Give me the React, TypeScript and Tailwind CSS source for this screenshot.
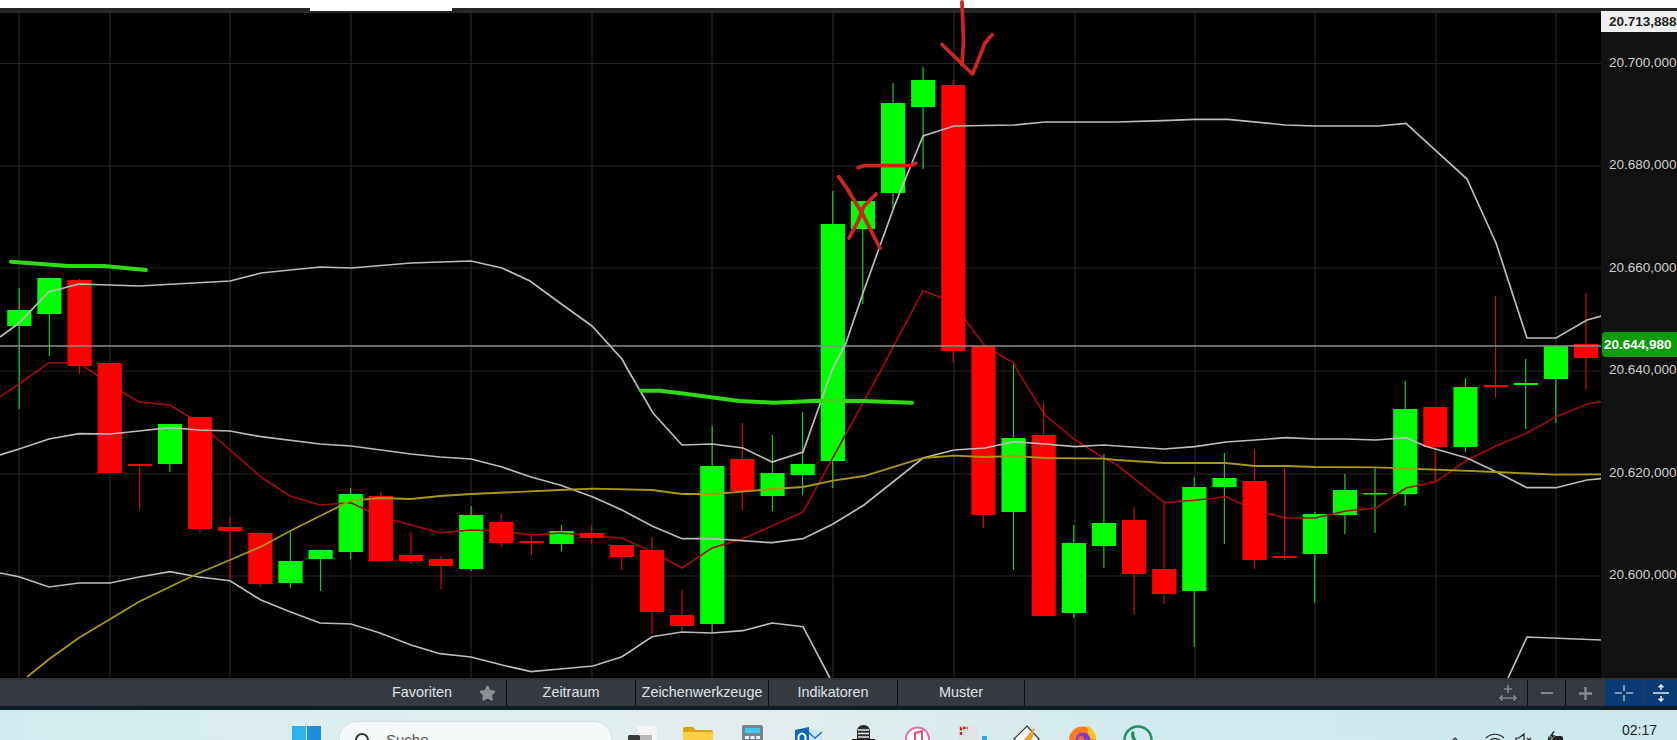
import { Star } from "lucide-react";

type Candle = [up: 0 | 1, wickTop: number, top: number, bottom: number, wickBottom: number];

const candles: Candle[] = [
  [1, 288, 310, 326, 409],
  [1, 278, 278, 314, 356],
  [0, 279, 280, 366, 374],
  [0, 363, 363, 473, 473],
  [0, 464, 464, 466, 510],
  [1, 424, 424, 464, 472],
  [0, 417, 417, 529, 533],
  [0, 517, 527, 531, 578],
  [0, 532, 533, 584, 587],
  [1, 532, 561, 583, 588],
  [1, 550, 550, 559, 591],
  [1, 488, 494, 552, 559],
  [0, 492, 496, 561, 561],
  [0, 532, 555, 561, 564],
  [0, 556, 559, 566, 589],
  [1, 506, 515, 569, 571],
  [0, 514, 522, 543, 547],
  [0, 536, 541, 543, 555],
  [1, 525, 531, 544, 551],
  [0, 525, 533, 538, 544],
  [0, 545, 545, 557, 570],
  [0, 537, 550, 612, 634],
  [0, 590, 615, 626, 632],
  [1, 426, 466, 624, 633],
  [0, 423, 459, 491, 510],
  [1, 435, 473, 496, 511],
  [1, 412, 464, 475, 495],
  [1, 191, 224, 461, 488],
  [1, 201, 201, 229, 304],
  [1, 83, 103, 193, 208],
  [1, 67, 80, 107, 169],
  [0, 80, 85, 351, 363],
  [0, 346, 346, 515, 528],
  [1, 363, 438, 512, 570],
  [0, 402, 435, 616, 616],
  [1, 525, 543, 613, 618],
  [1, 454, 523, 546, 568],
  [0, 507, 520, 574, 615],
  [0, 503, 569, 594, 604],
  [1, 477, 487, 591, 647],
  [1, 453, 478, 487, 544],
  [0, 450, 481, 560, 569],
  [0, 468, 556, 558, 560],
  [1, 512, 514, 554, 603],
  [1, 474, 490, 515, 534],
  [1, 468, 493, 494.5, 533],
  [1, 381, 409, 494, 506],
  [0, 407, 407, 447, 482],
  [1, 378, 387, 447, 452],
  [0, 296, 385, 387, 398],
  [1, 359, 383, 385, 429],
  [1, 346, 346, 379, 423],
  [0, 293, 344, 358, 390],
];

const upperBand =
  "0,337 19,323 48.6,292 79,284 139,286 230,281 261,273 320,267 351,268 411,263 471,261 502,268 530,281 560,303 592,326 622,359 628,370 653,413 682,445 712,444 743,448 772,462 803,452 832,370 846,343 863,293 894,207 923,136 954,126 1014,125 1045,122 1117,122 1163,120.7 1195,119.3 1228,119.3 1285,125 1315,126 1378,126 1406,123.3 1467,179 1496,243 1527,338 1556,338 1587,320 1601,316";
const middleBand =
  "0,455 19,449 49,439 79,433.7 110,434 139,431 170,427.7 199,430 230,431 261,436.7 320,444 351,446 411,454 440,457 471,459 502,467 531,477 560,485 593,497 622,510 652,526 682,538.7 712,538.7 772,542.7 803,538.7 833,524 864,505 923,458 954,450 985,448 1014,441.7 1045,444 1075,446.7 1104,445 1117,446 1164,449 1195,446.7 1226,442 1255,440 1286,437.7 1315,439 1346,439 1376,440 1406,437.7 1425,446 1467,458 1496,471.7 1527,487.7 1556,487.7 1587,480 1601,478.7";
const lowerBand =
  "0,573 19,576.7 49,587 79,583 110,583 139,577 170,571.7 199,577 230,580.7 261,600 290,611.7 320,623 351,624 380,633 411,645 440,653.7 471,657 502,665 531,671.7 560,669 593,666 622,656.7 652,636.7 682,632 712,633 743,630.7 772,623 803,626.7 830,678";
const lowerBandEnd = "1508,678 1527,637 1601,640";
const redLine =
  "0,396.7 19,384 48.6,363 79,363 122,392 139,402 170,405 199,423 230,450 261,477 290,496 320,505 351,502.7 380,516.7 411,525 440,532.7 471,530 502,531 531,535 560,533 593,535.7 622,538 652,551.7 682,568 712,548 743,538.7 772,526 803,512 881,370 923,290.7 942,298 954,302 966,320.7 984,345 996,353 1014,363 1017,370 1045,415 1075,440 1104,458 1117,465 1164.5,502.7 1195,500.3 1226,496.7 1255,510 1286,518 1315,518 1346,511 1376,508 1406,488 1436,481.7 1467,460 1496,446 1527,433 1556,416.7 1587,404 1601,402";
const yellowLine =
  "27,677 48,660 79,637.7 139,601.7 170,586.7 199,573 230,560 261,546.7 290,531 320,516 351,500.7 380,498 411,499 440,496 471,494 560,490 593,488.7 652,490 682,494 712,494 743,491.7 772,489 803,487 833,480.7 864,476 923,458 954,455.7 985,457 1014,456 1045,458 1104,458.7 1117,460 1164,463 1226,463 1255,466 1286,466 1315,467 1376,467.3 1436,469.7 1496,472 1556,474.7 1601,474.3";

const gridX = [19, 110, 230, 351, 471, 592, 712, 833, 954, 1075, 1195, 1315, 1436, 1556];
const gridY = [63.5, 166, 268, 371, 474, 576];
const axisLabels = ["20.700,000", "20.680,000", "20.660,000", "20.640,000", "20.620,000", "20.600,000"];

const candleX = (i: number) => 19.2 + 30.13 * i;

function Candles({ up }: { up: 0 | 1 }) {
  return (
    <g>
      {candles.map((c, i) => {
        if (c[0] !== up) return null;
        const x = candleX(i);
        return (
          <g key={i}>
            <line x1={x} x2={x} y1={c[1]} y2={c[4]} stroke={up ? "#16d016" : "#d00c0c"} strokeWidth="1.2" />
            <rect x={x - 12} y={c[2]} width="24.2" height={c[3] - c[2]} fill={up ? "#00ff00" : "#ff0000"} />
          </g>
        );
      })}
    </g>
  );
}

function Chart() {
  return (
    <svg viewBox="0 13 1601 665" className="block h-[665px] w-[1601px]">
      {gridX.map((x) => (
        <line key={x} x1={x} x2={x} y1="13" y2="678" stroke="#272727" strokeWidth="1.2" />
      ))}
      {gridY.map((y) => (
        <line key={y} x1="0" x2="1601" y1={y} y2={y} stroke="#272727" strokeWidth="1.2" />
      ))}
      <Candles up={1} />
      <polyline points={redLine} fill="none" stroke="#a80a0a" strokeWidth="1.6" />
      <Candles up={0} />
      <line x1="0" x2="1601" y1="346" y2="346" stroke="#8c8c8c" strokeWidth="1.4" />
      <g fill="none" stroke="#bcbcbc" strokeWidth="1.7">
        <polyline points={upperBand} />
        <polyline points={middleBand} />
        <polyline points={lowerBand} />
        <polyline points={lowerBandEnd} />
      </g>
      <polyline points={yellowLine} fill="none" stroke="#a8980e" strokeWidth="1.8" />
      <g fill="none" stroke="#2fdc12" strokeWidth="4" strokeLinecap="round" strokeLinejoin="round">
        <polyline points="11,261.7 68,266 104,266 146,270" />
        <polyline points="641,390.7 660,390.7 685,393.7 739,401 774,402.7 817,400.7 864,401 912,402.7" />
      </g>
    </svg>
  );
}

// hand drawn marks, these run over the white top bar
function Annotations() {
  return (
    <svg viewBox="0 0 1677 300" className="pointer-events-none absolute top-0 left-0 h-[300px] w-[1677px]">
      <g fill="none" stroke="#c9261c" strokeWidth="3.8" strokeLinecap="round" strokeLinejoin="round">
        <polyline points="962,2 963.5,40 962,65" />
        <polyline points="942,44.5 960,62 972.5,74 979.5,57 985,43 992,34.7" />
        <polyline points="858,167.7 864,165.7 910,165.7 916,163.3" />
        <polyline points="838.6,176.7 846,187 862,213 874,236.7 880,248" />
        <polyline points="876,194 863.6,206.7 858,221.7 849,238" />
      </g>
    </svg>
  );
}

function PriceAxis() {
  return (
    <div className="relative w-[76px] shrink-0 bg-[#111111] text-[13.5px] leading-none text-[#cfcfcf]">
      <div className="-mt-[2px] flex flex-col">
        {axisLabels.map((label) => (
          <div key={label} className="flex h-[102.5px] items-center whitespace-nowrap pl-[8px]">
            {label}
          </div>
        ))}
      </div>
      <div className="absolute -top-[2px] left-0 flex h-[21px] w-full items-center whitespace-nowrap bg-[#efefef] pl-[8px] font-bold text-[#222222]">
        20.713,888
      </div>
      <div className="absolute top-[319px] left-[1px] flex h-[25px] w-[75px] items-center whitespace-nowrap rounded-l-[4px] bg-[#0a9c0a] pl-[2px] font-bold text-white">
        20.644,980
      </div>
    </div>
  );
}

function ToolCell({ label, className }: { label: string; className: string }) {
  return (
    <div className={`flex h-full items-center justify-center border-r border-[#0c0c0c] text-[14.4px] text-[#dfe2e5] ${className}`}>
      {label}
    </div>
  );
}

function Toolbar() {
  return (
    <div className="flex h-[28px] shrink-0 border-t-2 border-[#2f3237] bg-[#363a40]">
      <div className="flex h-full w-[507px] items-center justify-end border-r border-[#0c0c0c] pr-[10px]">
        <span className="mr-[27px] text-[14.4px] text-[#dfe2e5]">Favoriten</span>
        <Star size={17} className="fill-[#8d9095] text-[#8d9095]" />
      </div>
      <ToolCell label="Zeitraum" className="w-[129px]" />
      <ToolCell label="Zeichenwerkzeuge" className="w-[133px]" />
      <ToolCell label="Indikatoren" className="w-[129px]" />
      <ToolCell label="Muster" className="w-[127px]" />
      <div className="flex h-full flex-1 items-center justify-end border-r border-[#0c0c0c] pr-[10px]">
        <svg width="18" height="18" viewBox="0 0 18 18" fill="none" stroke="#85898e" strokeWidth="1.6">
          <path d="M9 1v8M5 5h8M1 14h16M3.500 11.500 1 14l2.500 2.500M14.500 11.500 17 14l-2.500 2.500" />
        </svg>
      </div>
      <div className="flex h-full w-[38px] shrink-0 items-center justify-center border-r border-[#0c0c0c]">
        <span className="h-[2.5px] w-[12px] bg-[#85898e]" />
      </div>
      <div className="flex h-full w-[38px] shrink-0 items-center justify-center">
        <svg width="13" height="13" viewBox="0 0 13 13" stroke="#85898e" strokeWidth="2.4">
          <path d="M6.500 0v13M0 6.500h13" />
        </svg>
      </div>
      <div className="ml-px flex h-full w-[38px] shrink-0 items-center justify-center bg-[#0a3a73]">
        <svg width="18" height="18" viewBox="0 0 18 18" stroke="#dfe6ee" strokeWidth="1.1">
          <path d="M0 9h7M11 9h7M9 1v6M9 11v6" />
        </svg>
      </div>
      <div className="ml-px flex h-full w-[33px] shrink-0 items-center justify-center bg-[#0a3a73]">
        <svg width="18" height="18" viewBox="0 0 18 18" fill="none" stroke="#e6ebf1" strokeWidth="1.5">
          <path d="M1 9h16M9 1v5M6.500 3.500 9 1l2.500 2.500M9 17v-5M6.500 14.500 9 17l2.500-2.500" />
        </svg>
      </div>
    </div>
  );
}

function Taskbar() {
  return (
    <div className="flex h-[30px] shrink-0 items-start overflow-hidden bg-[linear-gradient(90deg,#d0ebee_0%,#dcedef_20%,#e4ecec_45%,#cfeaee_70%,#cbe9ed_100%)] pl-[292px]">
      <svg width="29" height="28" viewBox="0 0 29 28" className="mt-[16px] shrink-0">
        <rect width="14" height="14" fill="#2ab5f0" />
        <rect x="15" width="14" height="14" fill="#1a8fdc" />
      </svg>
      <div className="mt-[11px] ml-[18px] flex h-[36px] w-[273px] shrink-0 items-start rounded-t-[18px] border border-[#d5e2e3] bg-[#f5f9f9] pl-[14px]">
        <svg width="18" height="18" viewBox="0 0 18 18" fill="none" stroke="#333" strokeWidth="2" className="mt-[10px] shrink-0">
          <circle cx="8" cy="8" r="6" />
        </svg>
        <span className="mt-[10px] ml-[14px] text-[15px] leading-none text-[#555]">Suche</span>
      </div>
      <svg width="29" height="28" viewBox="0 0 29 28" className="mt-[16px] ml-[16px] shrink-0">
        <rect x="9" width="20" height="24" rx="2" fill="#f4f4f4" />
        <rect x="12" y="9" width="12" height="14" fill="#b9b9b9" />
        <rect y="9" width="12" height="14" rx="1.500" fill="#3a3a3a" />
      </svg>
      <svg width="30" height="24" viewBox="0 0 30 24" className="mt-[17px] ml-[26px] shrink-0">
        <path d="M0 2a2 2 0 0 1 2-2h8l3 3h15a2 2 0 0 1 2 2v4H0z" fill="#dca30c" />
        <rect y="5" width="30" height="18" rx="1" fill="#fbcf46" />
      </svg>
      <svg width="21" height="28" viewBox="0 0 21 28" className="mt-[15px] ml-[29px] shrink-0">
        <rect width="21" height="28" rx="2" fill="#76838f" />
        <rect x="3" y="3" width="15" height="5" fill="#41c6ee" />
        <rect x="3" y="11" width="4" height="3" fill="#e8eef2" />
        <rect x="8.500" y="11" width="4" height="3" fill="#e8eef2" />
        <rect x="14" y="11" width="4" height="3" fill="#e8eef2" />
      </svg>
      <svg width="27" height="26" viewBox="0 0 27 26" className="mt-[17px] ml-[32px] shrink-0">
        <path d="M12 3h15v16H12z" fill="#cfe6f7" />
        <path d="m13 5 7 6 7-6" fill="none" stroke="#1a7ac4" strokeWidth="1.5" />
        <path d="M0 3 14 0v24L0 21z" fill="#0f66b4" />
        <ellipse cx="7" cy="11" rx="3.600" ry="4.600" fill="none" stroke="#fff" strokeWidth="2" />
      </svg>
      <svg width="23" height="30" viewBox="0 0 23 30" className="mt-[15px] ml-[30px] shrink-0">
        <rect x="5" width="13" height="20" rx="6" fill="#2c2c2c" />
        <path d="M6 5h11M6 8.500h11M6 12h11" stroke="#e8e8e8" strokeWidth="1.4" />
        <rect y="14" width="23" height="3" fill="#222" />
      </svg>
      <svg width="25" height="26" viewBox="0 0 25 26" className="mt-[16px] ml-[30px] shrink-0">
        <circle cx="12.500" cy="13" r="11.500" fill="#fff" stroke="#e070b0" strokeWidth="2" />
        <path d="M10 16V7l7-2v9" fill="none" stroke="#ea4e6b" strokeWidth="2" />
      </svg>
      <svg width="29" height="28" viewBox="0 0 29 28" className="mt-[15px] ml-[28px] shrink-0">
        <rect width="20" height="26" rx="2" fill="#dfe3e4" />
        <path d="M3 10V3h7" fill="none" stroke="#b5351f" strokeWidth="2.400" strokeDasharray="3 1.400" />
        <rect x="24" y="11" width="5" height="5" fill="#3aa4dc" />
      </svg>
      <svg width="27" height="26" viewBox="0 0 27 26" className="mt-[15px] ml-[26px] shrink-0">
        <path d="M1 14 14 1l12 13-12 12z" fill="#fdfdfd" stroke="#333" strokeWidth="1.2" />
        <path d="M9 17 22 2l-3 12-6 6z" fill="#f0a020" />
      </svg>
      <svg width="29" height="28" viewBox="0 0 29 28" className="mt-[15px] ml-[28px] shrink-0">
        <circle cx="14.500" cy="15" r="13.500" fill="#ff7a1f" />
        <path d="M19 0c6 4 9 9 9 14h-7z" fill="#ffc21f" />
        <circle cx="15" cy="15" r="7.500" fill="#7a3dd0" />
        <circle cx="13" cy="14" r="3" fill="#f36a3c" />
      </svg>
      <svg width="30" height="30" viewBox="0 0 30 30" className="mt-[15px] ml-[26px] shrink-0">
        <circle cx="15" cy="15" r="13.500" fill="none" stroke="#1f8f5f" strokeWidth="2.400" />
        <path d="M10 8c-1 3 1 8 6 12" fill="none" stroke="#1f8f5f" strokeWidth="3.400" strokeLinecap="round" />
      </svg>
      <div className="flex-1" />
      <svg width="10" height="6" viewBox="0 0 10 6" fill="none" stroke="#222" strokeWidth="1.2" className="mt-[27px] shrink-0">
        <path d="m1 5 4-4 4 4" />
      </svg>
      <svg width="20" height="20" viewBox="0 0 20 20" fill="none" stroke="#222" strokeWidth="1.2" className="mt-[22px] ml-[25px] shrink-0">
        <path d="M1 6c5-5 13-5 18 0M4 9c3.500-3.200 8.500-3.200 12 0M7 12c1.800-1.600 4.200-1.600 6 0" />
      </svg>
      <svg width="18" height="18" viewBox="0 0 18 18" fill="none" stroke="#222" strokeWidth="1.2" className="mt-[22px] ml-[10px] shrink-0">
        <path d="M1 6h3l5-4v14l-5-4H1zM12 6l4 4M16 6l-4 4" />
      </svg>
      <svg width="20" height="18" viewBox="0 0 20 18" className="mt-[21px] ml-[12px] shrink-0">
        <rect x="3" y="5" width="15" height="12" rx="2" fill="#222" />
        <path d="M8 0 4 6h3L5 10l6-6H8l2-4z" fill="#222" stroke="#cdeaee" strokeWidth=".6" />
      </svg>
      <span className="mt-[13px] ml-[57px] mr-[20px] text-[14px] leading-none text-[#1d1d1d]">02:17</span>
    </div>
  );
}

export default function App() {
  return (
    <div className="relative flex h-[740px] w-[1677px] flex-col overflow-hidden bg-black font-['Liberation_Sans',Arial,sans-serif]">
      <div className="h-[8px] shrink-0 bg-white" />
      <div className="h-[5px] shrink-0 bg-[#262626]">
        <div className="ml-[310px] h-[3px] w-[142px] bg-white" />
      </div>
      <div className="flex h-[665px] shrink-0">
        <Chart />
        <PriceAxis />
      </div>
      <Toolbar />
      <div className="h-[4px] shrink-0 bg-[#0d1c24]" />
      <Taskbar />
      <Annotations />
    </div>
  );
}
